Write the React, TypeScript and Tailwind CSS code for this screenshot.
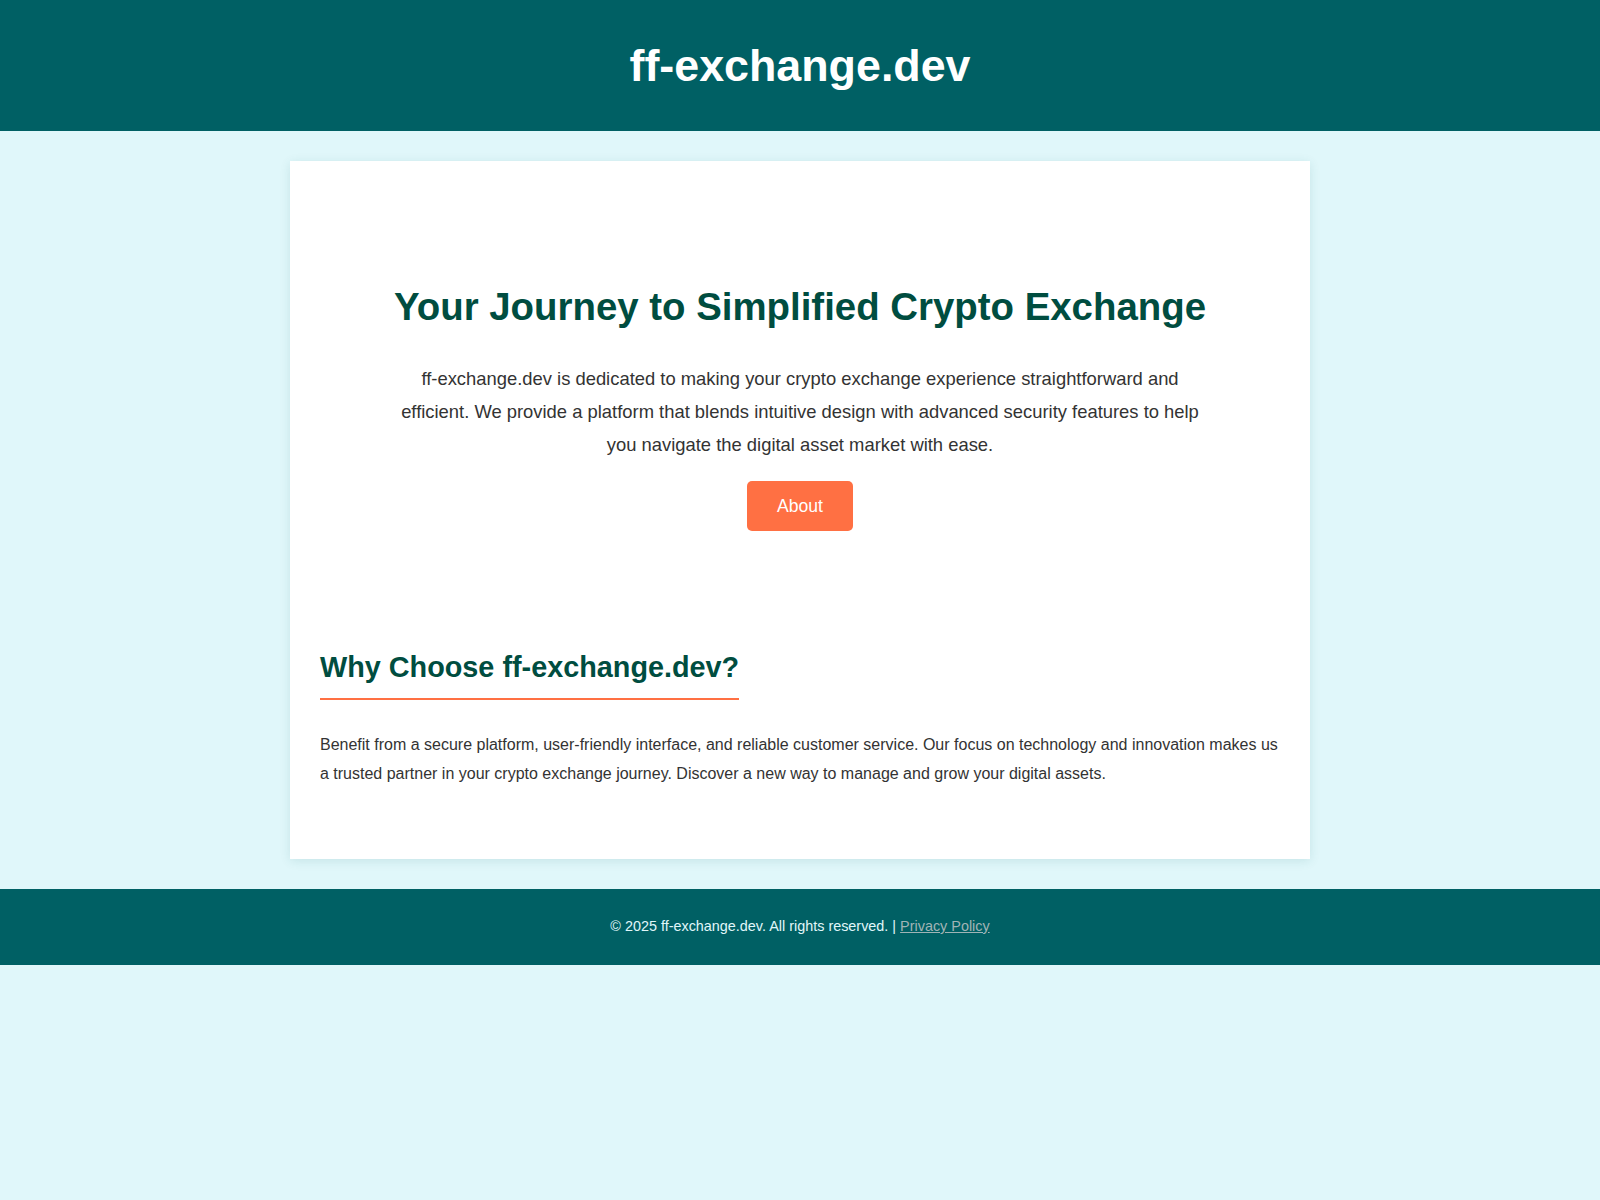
export default function App() {
  return (
    <div className="min-h-[1200px] bg-[#e0f7fa] font-['Liberation_Sans',Arial,sans-serif] text-[#333]">
      <header className="bg-[#006064] py-[40px] text-center">
        <h1 className="text-[44.8px] leading-[51px] font-bold text-white">ff-exchange.dev</h1>
      </header>

      <main className="mx-auto my-[30px] w-[1020px] bg-white p-[30px] shadow-[0_2px_10px_rgba(0,96,100,0.12)]">
        <section className="pt-[94px] pb-[60px] text-center">
          <h2 className="text-[38.4px] leading-[44px] font-bold text-[#004d40]">
            Your Journey to Simplified Crypto Exchange
          </h2>
          <p className="mx-auto mt-[33px] max-w-[800px] text-[18.4px] leading-[33.1px]">
            ff-exchange.dev is dedicated to making your crypto exchange experience straightforward and
            efficient. We provide a platform that blends intuitive design with advanced security features to help
            you navigate the digital asset market with ease.
          </p>
          <a
            href="#"
            className="mt-[20px] inline-block rounded-[5px] bg-[#ff7043] px-[30px] py-[15px] text-[17.6px] leading-[20px] text-white"
          >
            About
          </a>
        </section>

        <section className="pt-[60px] pb-[40px]">
          <h3 className="inline-block border-b-2 border-[#ff7043] pb-[14px] text-[28.8px] leading-[33px] font-bold text-[#004d40]">
            Why Choose ff-exchange.dev?
          </h3>
          <p className="mt-[31px] text-[16px] leading-[28.8px]">
            Benefit from a secure platform, user-friendly interface, and reliable customer service. Our focus on technology and innovation makes us
            a trusted partner in your crypto exchange journey. Discover a new way to manage and grow your digital assets.
          </p>
        </section>
      </main>

      <footer className="bg-[#006064] pt-[29px] pb-[31px] text-center text-[14.4px] leading-[16px] text-[#e0f7fa]">
        © 2025 ff-exchange.dev. All rights reserved. |{" "}
        <a href="#" className="text-[#a0b4b6] underline">
          Privacy Policy
        </a>
      </footer>
    </div>
  );
}
